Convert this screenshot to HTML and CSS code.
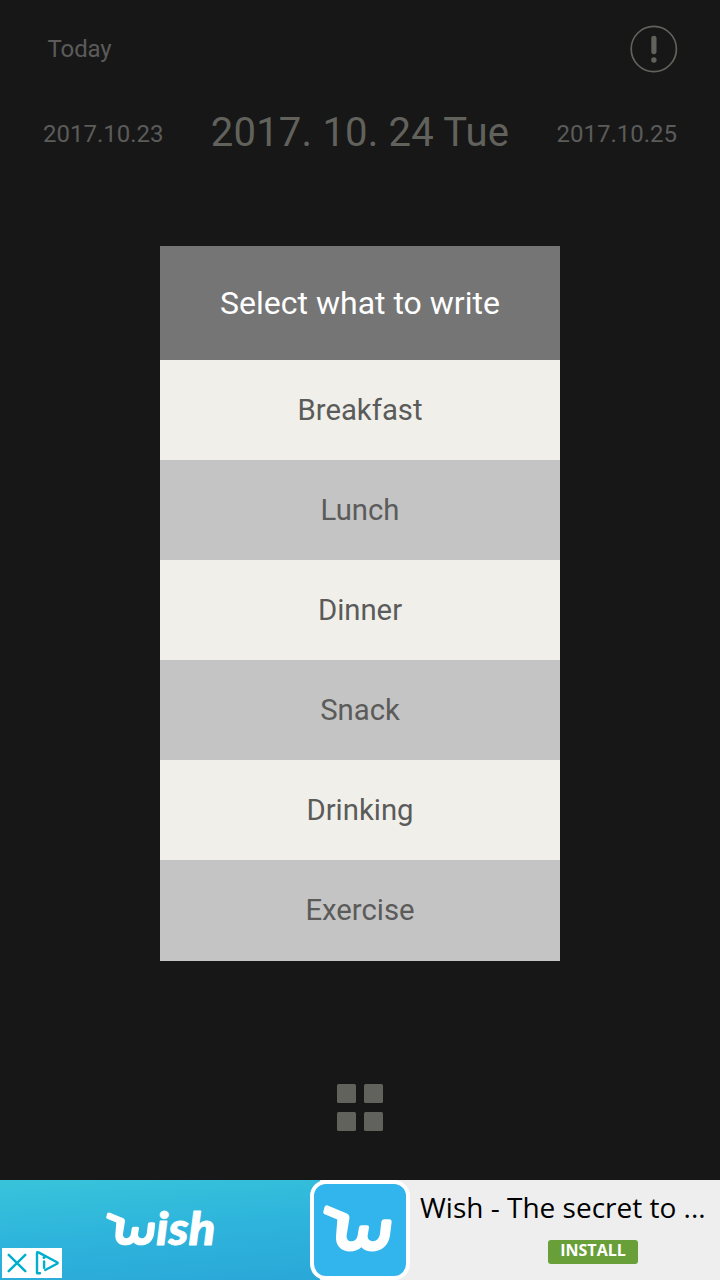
FILE: index.html
```html
<!DOCTYPE html>
<html lang="en">
<head>
<meta charset="utf-8">
<title>Diary</title>
<link rel="stylesheet" href="styles.css">
</head>
<body>
<svg class="defs" aria-hidden="true">
  <symbol id="wish-mark" viewBox="67 105 207 140">
    <path fill="#fff" d="M81 106Q74 104 72 110L68 124Q67 130 72 132L110 148L106 200C104 228 124 244 147 244C162 244 174 238 182 231C190 240 202 244 214 244C244 244 264 224 268 196L273 155Q273 147 266 147L250 147Q243 147 242 155L238 190C236 205 228 213 216 213C206 213 200 206 201 197L205 172Q206 165 199 165L183 165Q176 165 175 172L171 195C169 207 162 213 152 213C141 213 137 205 138 195L146 146Q148 133 137 129Z"/>
  </symbol>
</svg>
<div class="screen">
  <header class="topbar">
    <span class="today">Today</span>
    <svg class="alert" viewBox="0 0 48 48">
      <circle cx="23.8" cy="24" r="22.6" fill="none" stroke="currentColor" stroke-width="1.7"/>
      <rect x="21.3" y="10.8" width="5.2" height="18.4" rx="2.6" fill="currentColor"/>
      <circle cx="23.9" cy="35" r="2.7" fill="currentColor"/>
    </svg>
  </header>
  <nav class="dates">
    <span class="date-side">2017.10.23</span>
    <span class="date-now">2017. 10. 24 Tue</span>
    <span class="date-side">2017.10.25</span>
  </nav>
  <main class="dialog">
    <h1 class="dialog-title">Select what to write</h1>
    <ul class="options">
      <li class="option">Breakfast</li>
      <li class="option">Lunch</li>
      <li class="option">Dinner</li>
      <li class="option">Snack</li>
      <li class="option">Drinking</li>
      <li class="option">Exercise</li>
    </ul>
  </main>
  <div class="menu-grid"><i class="tile"></i><i class="tile"></i><i class="tile"></i><i class="tile"></i></div>
  <footer class="ad">
    <div class="ad-banner">
      <svg class="wordmark" viewBox="0 0 112 40">
        <use href="#wish-mark" x="0" y="2.3" width="49.5" height="33.5"/>
        <text class="wordmark-text" x="50" y="34.5" textLength="59.5" lengthAdjust="spacingAndGlyphs">ish</text>
      </svg>
      <div class="ad-choices">
        <svg class="ad-controls" viewBox="0 0 60 30" fill="none" stroke="#00aecd" stroke-width="2.4" stroke-linecap="round" stroke-linejoin="round">
          <path d="M6.7 6.8L23.3 23.2M23.3 6.8L6.7 23.2"/>
          <path d="M38 25.3H36Q35 25.5 35 24.5V5Q35 3.7 36.5 4.4L55 14.2Q56.3 15 55 15.8L43.2 22"/>
          <path d="M42.1 13.5V19.8" stroke-width="2.4"/>
          <circle cx="42" cy="9.6" r="1.5" fill="#00aecd" stroke="none"/>
        </svg>
      </div>
    </div>
    <div class="ad-icon"><svg class="ad-icon-mark"><use href="#wish-mark"/></svg></div>
    <div class="ad-info">
      <div class="ad-title">Wish - The secret to ...</div>
      <div class="install">INSTALL</div>
    </div>
  </footer>
</div>
</body>
</html>
```

FILE: styles.css
```css
body { margin: 0; background: #171717; font-family: Roboto, sans-serif; }
.defs { position: absolute; width: 0; height: 0; }
.screen { width: 720px; height: 1280px; display: flex; flex-direction: column; align-items: center; overflow: hidden; }
.topbar { width: 100%; height: 98px; box-sizing: border-box; padding: 0 42px 0 47.5px; display: flex; justify-content: space-between; align-items: center; color: #5b5b5a; flex: none; }
.today { font-size: 24px; letter-spacing: -.1px; }
.alert { width: 48px; height: 48px; color: #62625d; }
.dates { width: 100%; height: 68px; box-sizing: border-box; padding: 0 43px; display: flex; justify-content: space-between; align-items: center; white-space: nowrap; flex: none; }
.date-side { font-size: 24px; color: #5b5b5a; padding-top: 3px; }
.date-now { font-size: 40px; letter-spacing: .2px; color: #62625d; }
.dialog { width: 400px; height: 715px; margin-top: 80px; background: #c4c4c4; flex: none; }
.dialog-title { margin: 0; height: 114px; line-height: 114px; background: #757575; color: #fff; font-size: 32px; font-weight: 400; text-align: center; }
.options { list-style: none; margin: 0; padding: 0; }
.option { height: 100px; line-height: 100px; background: #f0efea; color: #5b5b5a; font-size: 29.3px; text-align: center; }
.option:nth-child(even) { background: #c4c4c4; }
.menu-grid { margin-top: 123px; display: grid; grid-template-columns: 19px 19px; grid-template-rows: 19px 19px; gap: 8.5px; flex: none; }
.tile { background: #62625d; border-radius: 1.5px; }
.ad { width: 100%; height: 100px; margin-top: auto; display: flex; background: #eee; flex: none; }
.ad-banner { width: 320px; height: 100px; position: relative; background: linear-gradient(175deg, #38c2da 5%, #2eb4dc 50%, #2aa9d8 95%); flex: none; }
.wordmark { display: block; width: 112px; height: 40px; margin: 30px 0 0 106px; overflow: visible; }
.wordmark-text { font: italic 900 45px Lato, sans-serif; fill: #fff; stroke: #fff; stroke-width: .8px; stroke-linejoin: round; }
.ad-choices { position: absolute; left: 2px; bottom: 2px; width: 60px; height: 30px; background: #fff; }
.ad-controls { display: block; width: 60px; height: 30px; }
.ad-icon { width: 100px; height: 100px; box-sizing: border-box; margin-left: -10px; border: 4px solid #fff; border-radius: 16px; background: #32b5ed; position: relative; flex: none; }
.ad-icon-mark { display: block; width: 69px; height: 47px; margin: 21px 0 0 8.5px; }
.ad-info { flex: 1; padding-left: 10px; font-family: "Open Sans", sans-serif; white-space: nowrap; }
.ad-title { height: 60px; line-height: 55px; font-size: 28px; color: #000; }
.install { width: 90px; height: 24px; line-height: 20px; margin-left: 128px; border-radius: 3px; background: #689f38; color: #fff; font-size: 16px; font-weight: 700; text-align: center; }
```
